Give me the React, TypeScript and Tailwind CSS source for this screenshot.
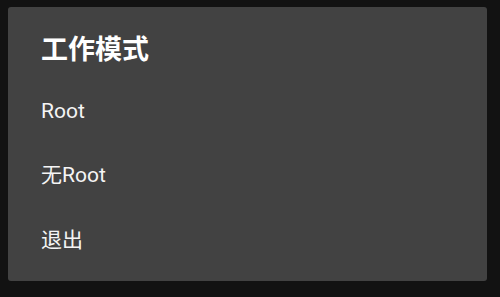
const ITEMS = ['Root', '无Root', '退出'];

export default function App() {
    return (
        <div
            className="h-[297px] w-[500px] bg-[#121212] pt-[7px] pl-[8px]"
            style={{ fontFamily: 'Roboto, "Noto Sans CJK SC", sans-serif' }}
        >
            <div className="flex h-[274px] w-[479px] flex-col rounded-[3px] bg-[#424242] pt-[27px] pl-[33px]">
                <h1 className="h-[32px] text-[27px] font-bold leading-[32px] text-white">工作模式</h1>
                <div className="mt-[13px] flex flex-col">
                    {ITEMS.map((item) => (
                        <div key={item} className="flex h-[64.5px] items-center text-[21px] text-[#f5f5f5]">
                            {item}
                        </div>
                    ))}
                </div>
            </div>
        </div>
    );
}
